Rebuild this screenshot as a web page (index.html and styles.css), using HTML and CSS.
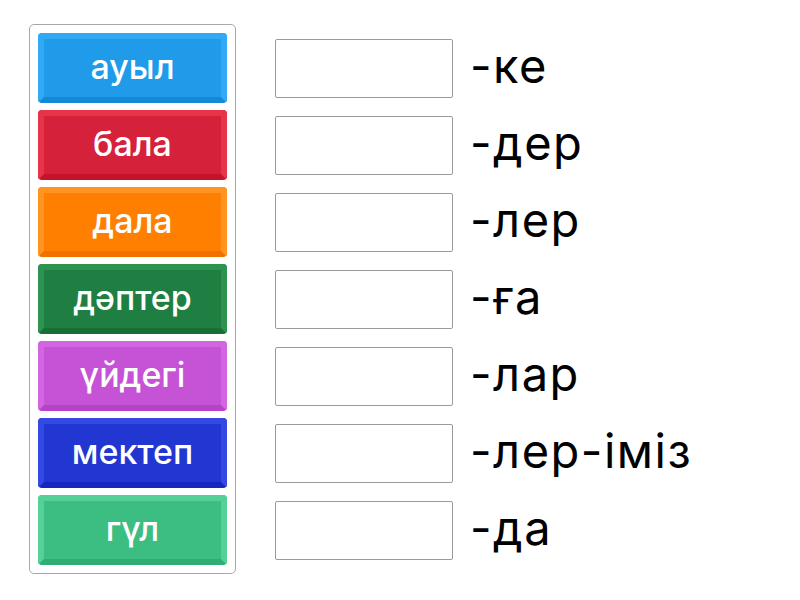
FILE: index.html
```html
<!DOCTYPE html>
<html>
<head>
<meta charset="utf-8">
<link rel="stylesheet" href="styles.css">
</head>
<body>
<div class="page">
  <div class="bank">
    <div class="tile c-blue">ауыл</div>
    <div class="tile c-red">бала</div>
    <div class="tile c-orange">дала</div>
    <div class="tile c-green">дәптер</div>
    <div class="tile c-purple">үйдегі</div>
    <div class="tile c-navy">мектеп</div>
    <div class="tile c-mint">гүл</div>
  </div>
  <div class="targets">
    <div class="row"><div class="slot"></div><div class="label">-ке</div></div>
    <div class="row"><div class="slot"></div><div class="label">-дер</div></div>
    <div class="row"><div class="slot"></div><div class="label">-лер</div></div>
    <div class="row"><div class="slot"></div><div class="label">-ға</div></div>
    <div class="row"><div class="slot"></div><div class="label">-лар</div></div>
    <div class="row"><div class="slot"></div><div class="label">-лер-іміз</div></div>
    <div class="row"><div class="slot"></div><div class="label">-да</div></div>
  </div>
</div>
</body>
</html>
```

FILE: styles.css
```css
html, body {
  margin: 0;
  padding: 0;
  background: #ffffff;
}
body {
  font-family: Inter, "Noto Sans", sans-serif;
}
.page {
  display: flex;
  align-items: flex-start;
  padding: 24px 0 0 29px;
}
.bank {
  display: flex;
  flex-direction: column;
  gap: 7px;
  padding: 8px;
  border: 1px solid #a8a8a8;
  border-radius: 5px;
  width: 189px;
}
.tile {
  box-sizing: border-box;
  height: 70px;
  border-radius: 4px;
  border: 6px solid;
  border-color: var(--lt) var(--lt) var(--dk) var(--lt);
  background: var(--bg);
  color: #ffffff;
  font-size: 34px;
  font-weight: 500;
  display: flex;
  align-items: center;
  justify-content: center;
  padding-bottom: 3px;
}
.c-blue   { --bg: #1f9be9; --lt: #33a9f5; --dk: #1588d6; }
.c-red    { --bg: #d6213b; --lt: #e63449; --dk: #c4142c; }
.c-orange { --bg: #ff7f00; --lt: #ff9422; --dk: #f07000; }
.c-green  { --bg: #1f7f42; --lt: #2e9251; --dk: #176f36; }
.c-purple { --bg: #c653d6; --lt: #d266e0; --dk: #b643c6; }
.c-navy   { --bg: #2236d2; --lt: #3349e2; --dk: #1626c0; }
.c-mint   { --bg: #3cbe83; --lt: #55d197; --dk: #30ad74; }

.targets {
  display: flex;
  flex-direction: column;
  gap: 18px;
  margin: 15px 0 0 39px;
}
.row {
  display: flex;
  align-items: center;
  gap: 17px;
}
.slot {
  box-sizing: border-box;
  width: 178px;
  height: 59px;
  border: 1px solid #9a9a9a;
  border-radius: 2px;
  background: #ffffff;
}
.label {
  font-size: 47px;
  letter-spacing: 1.5px;
  color: #000000;
  line-height: 1;
  padding-bottom: 6px;
}
```
